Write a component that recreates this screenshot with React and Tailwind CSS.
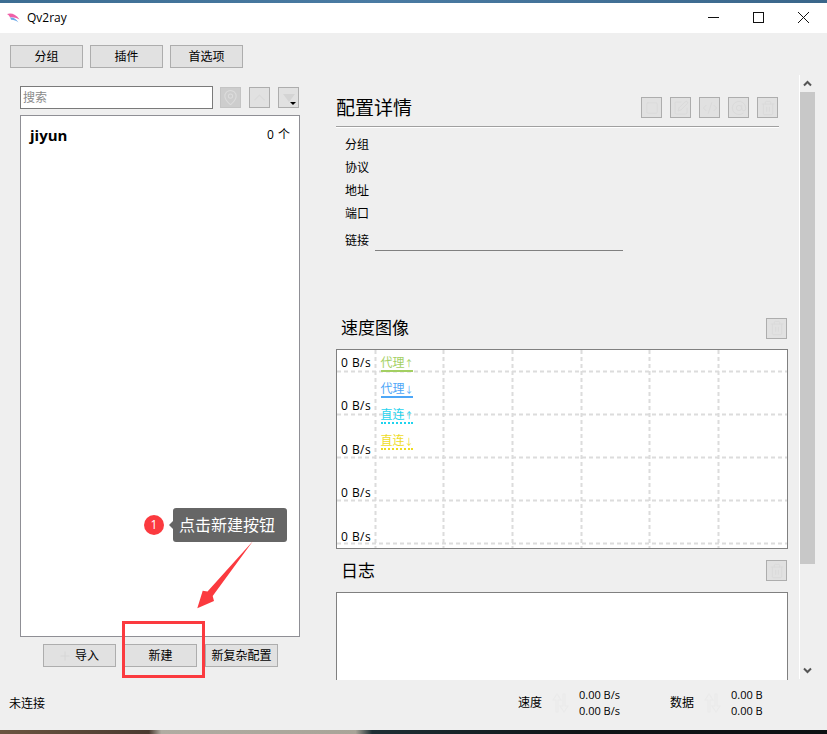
import React from "react";
import { Square, SquarePen, CodeXml, AtSign, Trash2, Plus, MapPin, ChevronUp } from "lucide-react";

const FONT = "[font-family:'Open_Sans','Noto_Sans_CJK_SC',sans-serif]";

function Btn({ children, extra = "justify-center" }) {
  return (
    <div className={`w-[73px] h-[23px] shrink-0 flex items-center ${extra} bg-[#e1e1e1] border border-[#adadad] text-[12px] text-black`}>
      {children}
    </div>
  );
}

function IconBtn({ Icon, size = 16, extra = "bg-[#e1e1e1] border-[#adadad]", color = "text-[#dadada]" }) {
  return (
    <div className={`w-[21px] h-[21px] shrink-0 flex items-center justify-center border ${extra}`}>
      {Icon ? <Icon size={size} strokeWidth={1.5} className={color} /> : null}
    </div>
  );
}

function Detail({ label }) {
  return <div className="h-[23px] flex items-center text-[12px] pl-[9px]">{label}</div>;
}

function Legend({ label, arrow, color, line, dashed }) {
  return (
    <div className="h-[26px] w-[32px] flex flex-col items-center">
      <div className={`h-[20px] leading-[20px] text-[12px] whitespace-nowrap ${color}`}>
        {label}
        <span className="text-[9px]">{arrow}</span>
      </div>
      <div className={`w-full border-t-2 ${line} ${dashed ? "border-dotted" : ""} mt-[-3px]`} />
    </div>
  );
}

function Grid() {
  const h = [21, 64, 107, 150, 193];
  const v = [38, 106, 175, 244, 312, 381];
  return (
    <svg className="absolute left-0 top-0" width="450" height="198" viewBox="0 0 450 198">
      {h.map((y) => (
        <line key={y} x1="0" x2="450" y1={y + 0.5} y2={y + 0.5} stroke="#dcdcdc" strokeWidth="2" strokeDasharray="4 3" />
      ))}
      {v.map((x) => (
        <line key={x} x1={x + 0.5} x2={x + 0.5} y1="0" y2="198" stroke="#dcdcdc" strokeWidth="2" strokeDasharray="4 3" />
      ))}
    </svg>
  );
}

function UpDown() {
  return (
    <svg className="block" width="17" height="20" viewBox="0 0 17 20" fill="none" stroke="#eaeaea" strokeWidth="1.2">
      <path d="M4 19V7H1L5 1l4 6H6V19Z" />
      <path d="M11 1V13H8l4 6 4-6h-3V1Z" />
    </svg>
  );
}

export default function App() {
  return (
    <div className={`relative w-[827px] h-[734px] overflow-hidden flex flex-col bg-[#efefef] text-black ${FONT}`}>
      <div className="h-[3px] shrink-0 bg-[linear-gradient(90deg,#3c6d92,#4a7ba3_45%,#3a668a)]" />

      {/* title bar */}
      <div className="h-[30px] shrink-0 bg-white flex items-center">
        <svg className="ml-[7px]" width="13" height="10" viewBox="0 0 13 10">
          <path d="M0 1C4-.5 9 1 12.5 6.5 9 4.6 5 4 3 4.5 2.6 3 1.5 1.8 0 1Z" fill="#f05fa8" />
          <path d="M3 4.5C6 4 9.5 6 11.5 9.5 9 7.5 6 6.5 4 6.8 3.8 6 3.5 5.2 3 4.5Z" fill="#6aa8e8" />
        </svg>
        <span className="ml-[7px] text-[12px]">Qv2ray</span>
        <div className="ml-auto flex items-center">
          <svg width="45" height="30" viewBox="0 0 45 30"><path d="M16 14.5h11" stroke="#111" strokeWidth="1" /></svg>
          <svg width="45" height="30" viewBox="0 0 45 30"><rect x="16.5" y="9.5" width="10" height="10" fill="none" stroke="#111" /></svg>
          <svg width="45" height="30" viewBox="0 0 45 30"><path d="M16 9l11 11M27 9L16 20" stroke="#111" strokeWidth="1" /></svg>
        </div>
      </div>

      {/* toolbar */}
      <div className="shrink-0 flex gap-[7px] pl-[10px] pt-[12px]">
        <Btn>分组</Btn>
        <Btn>插件</Btn>
        <Btn>首选项</Btn>
      </div>

      {/* main */}
      <div className="mt-[7px] h-[605px] shrink-0 flex">
        {/* left column */}
        <div className="ml-[20px] w-[280px] shrink-0 pt-[11px] flex flex-col">
          <div className="flex items-center h-[23px]">
            <div className="w-[193px] h-[23px] bg-white border border-[#7a7a7a] flex items-center pl-[2px] text-[12px] text-[#8a8a8a]">搜索</div>
            <div className="ml-[7px] flex gap-[8px]">
              <IconBtn Icon={MapPin} size={17} extra="bg-[#cdcdcd] border-[#c4c4c4]" color="text-[#dcdcdc]" />
              <IconBtn Icon={ChevronUp} size={19} />
              <div className="relative w-[21px] h-[21px] flex items-center justify-center bg-[#e1e1e1] border border-[#adadad]">
                <div className="w-0 h-0 border-x-[6px] border-x-transparent border-t-[8px] border-t-[#d4d4d4]" />
                <div className="absolute right-[2px] bottom-[2px] w-0 h-0 border-x-[3px] border-x-transparent border-t-[3px] border-t-black" />
              </div>
            </div>
          </div>
          <div className="mt-[6px] h-[522px] bg-white border border-[#8f8f95] px-[9px] pt-[8px]">
            <div className="flex items-center justify-between h-[22px]">
              <span className="text-[15px] font-bold">jiyun</span>
              <span className="text-[12px] flex">
                <span>0</span>
                <span className="ml-[4px]">个</span>
              </span>
            </div>
          </div>
          <div className="mt-[7px] flex gap-[8px] pl-[23px]">
            <Btn extra="pl-[14px]">
              <Plus size={14} className="text-[#d8d8d8] mr-[3px]" />
              <span>导入</span>
            </Btn>
            <Btn>新建</Btn>
            <Btn>新复杂配置</Btn>
          </div>
        </div>

        {/* right scroll area */}
        <div className="ml-[36px] w-[452px] shrink-0 h-[605px] overflow-hidden pt-[22px]">
          <div className="h-[29px] w-[443px] flex items-start justify-between pr-[1px]">
            <span className="text-[19px] leading-[24px] mt-[-1px]">配置详情</span>
            <div className="flex gap-[8px]">
              <IconBtn Icon={Square} size={14} />
              <IconBtn Icon={SquarePen} />
              <IconBtn Icon={CodeXml} />
              <IconBtn Icon={AtSign} />
              <IconBtn Icon={Trash2} />
            </div>
          </div>
          <div className="w-[443px] border-t border-[#a0a0a0] border-b border-b-white h-[2px]" />
          <div className="mt-[5px]">
            <Detail label="分组" />
            <Detail label="协议" />
            <Detail label="地址" />
            <Detail label="端口" />
            <div className="flex items-end h-[26px]">
              <div className="w-[39px] pl-[9px] text-[12px] mb-[1px]">链接</div>
              <div className="w-[248px] border-b border-[#808080] h-[20px]" />
            </div>
          </div>

          <div className="mt-[66px] flex items-center justify-between h-[22px] pl-[5px] pr-[1px]">
            <span className="text-[17px] leading-[22px]">速度图像</span>
            <IconBtn Icon={Trash2} />
          </div>
          <div className="mt-[10px] relative h-[200px] bg-white border border-[#808080]">
            <Grid />
            <div className="relative pl-[4px] pt-[3px] h-full flex">
              <div className="flex flex-col gap-[23.4px] text-[12px] leading-[20px] tracking-[0.45px]">
                <div>0 B/s</div>
                <div>0 B/s</div>
                <div>0 B/s</div>
                <div>0 B/s</div>
                <div>0 B/s</div>
              </div>
              <div className="ml-[10px] flex flex-col">
                <Legend label="代理" arrow="↑" color="text-[#a3cf62]" line="border-[#a3cf62]" />
                <Legend label="代理" arrow="↓" color="text-[#4da6f7]" line="border-[#4da6f7]" />
                <Legend label="直连" arrow="↑" color="text-[#1fd3ee]" line="border-[#1fd3ee]" dashed />
                <Legend label="直连" arrow="↓" color="text-[#efdc1f]" line="border-[#efdc1f]" dashed />
              </div>
            </div>
          </div>

          <div className="mt-[11px] flex items-center justify-between h-[21px] pl-[5px] pr-[1px]">
            <span className="text-[17px] leading-[22px]">日志</span>
            <IconBtn Icon={Trash2} />
          </div>
          <div className="mt-[11px] h-[120px] bg-white border border-[#808080]" />
        </div>

        {/* scrollbar */}
        <div className="ml-[11px] w-[16px] shrink-0 h-[604px] border-l border-white flex flex-col">
          <div className="h-[17px] flex items-center justify-center">
            <svg width="9" height="7" viewBox="0 0 9 7"><path d="M1 5.5l3.5-3.5L8 5.5" fill="none" stroke="#555" strokeWidth="2" /></svg>
          </div>
          <div className="h-[472px] bg-[#c8c8c8]" />
          <div className="mt-auto h-[17px] flex items-center justify-center">
            <svg width="9" height="7" viewBox="0 0 9 7"><path d="M1 1.5L4.5 5 8 1.5" fill="none" stroke="#555" strokeWidth="2" /></svg>
          </div>
        </div>
      </div>

      {/* status bar */}
      <div className="flex-1 flex items-start pl-[9px] text-[12px]">
        <span className="mt-[15px]">未连接</span>
        <div className="ml-auto flex items-center mt-[7px] mr-[65px]">
          <span>速度</span>
          <span className="ml-[10px]"><UpDown /></span>
          <div className="ml-[10px] w-[91px] text-[11px] leading-[16px]">
            <div>0.00 B/s</div>
            <div>0.00 B/s</div>
          </div>
          <span>数据</span>
          <span className="ml-[10px]"><UpDown /></span>
          <div className="ml-[10px] w-[31px] whitespace-nowrap text-[11px] leading-[16px]">
            <div>0.00 B</div>
            <div>0.00 B</div>
          </div>
        </div>
      </div>

      <div className="h-[4px] shrink-0 bg-[linear-gradient(90deg,#6b5540,#4a3a30_18%,#b0aca2_19.5%,#a8a498_43%,#1d2f34_45%,#101517_70%,#0d1012)]" />

      {/* annotation overlay */}
      <div className="absolute left-[144px] top-[515px] w-[20px] h-[20px] rounded-full bg-[#fb3a3f] text-white text-[12px] flex items-center justify-center">1</div>
      <div className="absolute left-[173px] top-[508px] w-[114px] h-[34px] rounded-[3px] bg-[#666666] text-white text-[16px] flex items-center pl-[6px]">
        点击新建按钮
        <div className="absolute left-[-4px] top-[13px] w-0 h-0 border-y-[4px] border-y-transparent border-r-[4px] border-r-[#666666]" />
      </div>
      <svg className="absolute left-[190px] top-[535px]" width="70" height="80" viewBox="190 535 70 80">
        <polygon points="253,541 212.7,596 214,601 197.3,608.3 202.7,590.7 207.5,591.5" fill="#fb3a3f" />
      </svg>
      <div className="absolute left-[122px] top-[621px] w-[83px] h-[57px] border-[3px] border-[#fb3a3f]" />
    </div>
  );
}
